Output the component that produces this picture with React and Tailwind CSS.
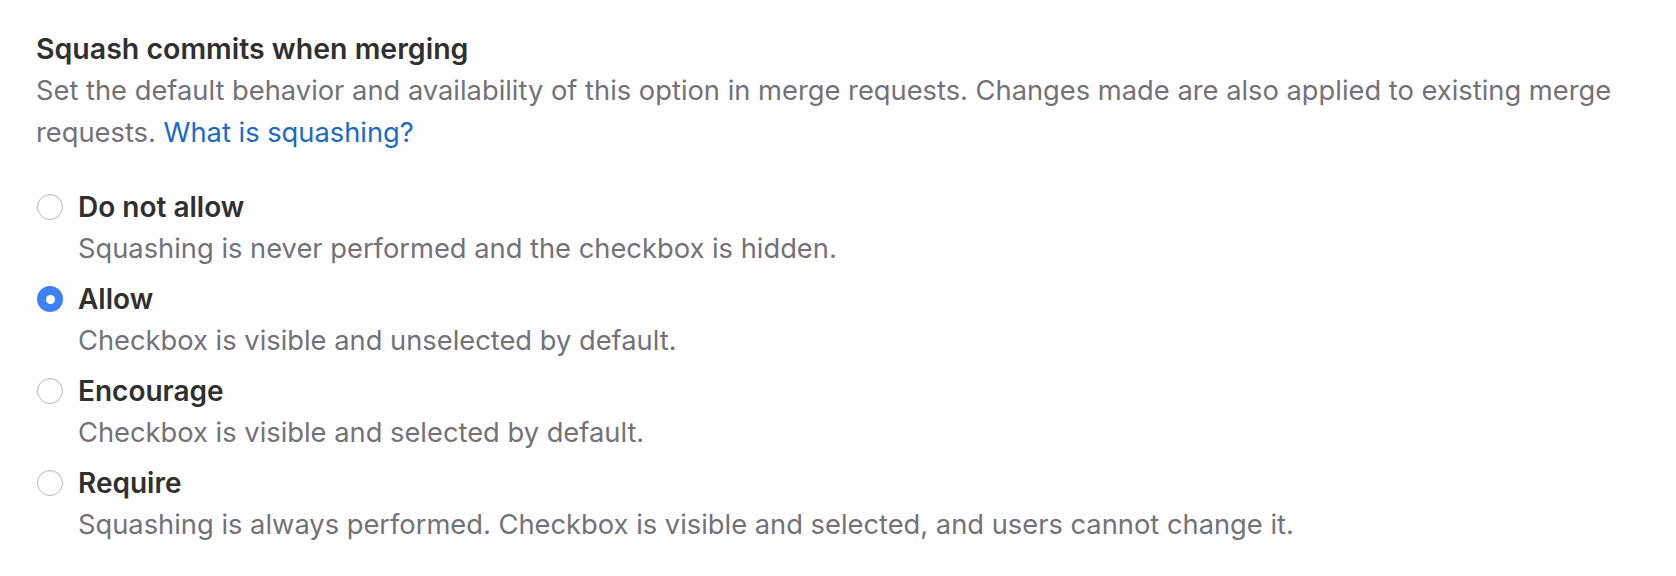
const OPTIONS = [
  { id: 'never', label: 'Do not allow', help: 'Squashing is never performed and the checkbox is hidden.' },
  { id: 'allow', label: 'Allow', help: 'Checkbox is visible and unselected by default.' },
  { id: 'encourage', label: 'Encourage', help: 'Checkbox is visible and selected by default.' },
  { id: 'require', label: 'Require', help: 'Squashing is always performed. Checkbox is visible and selected, and users cannot change it.' },
];

function Radio({ checked }) {
  if (checked) {
    return (
      <span className="w-[26px] h-[26px] rounded-full bg-[#3c81f6] flex items-center justify-center flex-shrink-0">
        <span className="w-[9px] h-[9px] rounded-full bg-white" />
      </span>
    );
  }
  return (
    <span className="w-[26px] h-[26px] rounded-full bg-white border border-[#b8b8b8] shadow-[inset_0_1px_1px_rgba(0,0,0,0.06)] flex-shrink-0" />
  );
}

export default function App() {
  const selected = 'allow';

  return (
    <div className="w-[1676px] h-[576px] bg-white pl-[36px] pt-[28px] font-['Inter',sans-serif] text-[27.3px] leading-[42px]">
      <h3 className="font-semibold text-[28.5px] text-[#303030]">Squash commits when merging</h3>
      <p className="text-[#737278] w-[1610px]">
        Set the default behavior and availability of this option in merge requests. Changes made are also applied to existing merge requests.{' '}
        <a href="#" className="text-[#1a6bc9]">What is squashing?</a>
      </p>

      <div className="mt-[32px] flex flex-col gap-[8px]">
        {OPTIONS.map((opt) => (
          <label key={opt.id} className="block">
            <div className="flex items-center">
              <span className="ml-[1px] mr-[15px] flex">
                <Radio checked={opt.id === selected} />
              </span>
              <span className="font-semibold text-[28px] text-[#303030]">{opt.label}</span>
            </div>
            <p className="pl-[42px] text-[#737278]">{opt.help}</p>
          </label>
        ))}
      </div>
    </div>
  );
}
